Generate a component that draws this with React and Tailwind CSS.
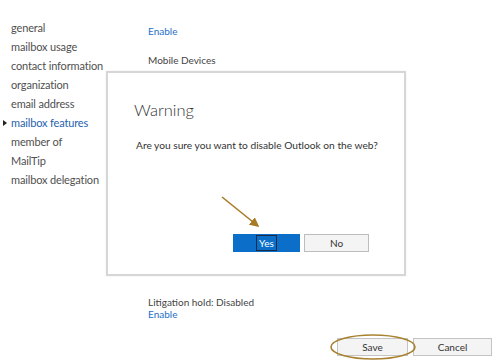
const navItems = [
  'general',
  'mailbox usage',
  'contact information',
  'organization',
  'email address',
  'mailbox features',
  'member of',
  'MailTip',
  'mailbox delegation',
]

const font = { fontFamily: 'Lato, "Open Sans", sans-serif' }

function NavList() {
  return (
    <div className="w-[137px] shrink-0 pt-[18px]">
      {navItems.map((item) => {
        const active = item === 'mailbox features'
        return (
          <div key={item} className="relative flex h-[19px] items-center pl-[11px]">
            {active && (
              <span className="absolute left-[3px] top-[7px] h-0 w-0 border-y-[3px] border-l-[4px] border-y-transparent border-l-[#222]" />
            )}
            <span
              className={
                active
                  ? 'text-[11px] leading-[19px] tracking-[-0.15px] text-[#1f5fae]'
                  : 'text-[11px] leading-[19px] tracking-[-0.15px] text-[#505050]'
              }
            >
              {item}
            </span>
          </div>
        )
      })}
    </div>
  )
}

function Details() {
  return (
    <div className="flex flex-1 flex-col pb-[12px] pl-[11px] text-[10px] leading-[12px]">
      <div className="pt-[25px] text-[#1e6fc8]">Enable</div>
      <div className="pt-[17px] text-[#444]">Mobile Devices</div>
      <div className="pt-[1.5px] text-[#1e6fc8]">Disable Exchange ActiveSync</div>
      <div className="flex-1" />
      <div className="text-[#444]">Litigation hold: Disabled</div>
      <div className="text-[#1e6fc8]">Enable</div>
    </div>
  )
}

function Dialog() {
  return (
    <div className="absolute left-[106px] top-[71px] flex h-[205px] w-[300px] flex-col border-2 border-[#d6d6d6] bg-white shadow-[0_0_2px_rgba(0,0,0,0.08)]">
      <div className="pl-[26px] pt-[26px] text-[16.5px] font-light leading-[22px] text-[#333]">Warning</div>
      <div className="pl-[28px] pt-[18px] text-[10.2px] leading-[12px] text-[#333]">
        Are you sure you want to disable Outlook on the web?
      </div>
      <div className="flex-1" />
      <div className="flex justify-end gap-[4px] pb-[22px] pr-[35px]">
        <button className="flex h-[18px] w-[67px] items-center justify-center bg-[#0b6fca] text-[10px] text-white">
          <span className="border border-[#1b2a44] px-[2px] leading-[14px]">Yes</span>
        </button>
        <button className="h-[18px] w-[65px] border border-[#bdbdbd] bg-[#f4f4f4] text-[10px] text-[#333]">
          No
        </button>
      </div>
    </div>
  )
}

function Annotations() {
  return (
    <svg className="pointer-events-none absolute left-0 top-0" width="499" height="361">
      <defs>
        <marker id="head" markerWidth="6" markerHeight="6" refX="5" refY="3" orient="auto">
          <path d="M0,0 L6,3 L0,6 Z" fill="#a77b25" />
        </marker>
      </defs>
      <line x1="222" y1="197" x2="258" y2="226" stroke="#a77b25" strokeWidth="1.6" markerEnd="url(#head)" />
      <ellipse cx="373" cy="347" rx="42" ry="12" fill="none" stroke="#a9822f" strokeWidth="1.6" />
    </svg>
  )
}

export default function App() {
  return (
    <div className="relative flex h-[361px] w-[499px] flex-col overflow-hidden bg-white" style={font}>
      <div className="flex flex-1">
        <NavList />
        <Details />
      </div>
      <div className="flex justify-end gap-[5px] pb-[5px] pr-[7px] pt-[6px]">
        <button className="h-[18px] w-[71px] border border-[#c4c4c4] bg-[#f4f4f4] text-[10px] text-[#333]">Save</button>
        <button className="h-[18px] w-[79px] border border-[#c4c4c4] bg-[#f4f4f4] text-[10px] text-[#333]">Cancel</button>
      </div>
      <Dialog />
      <Annotations />
    </div>
  )
}
